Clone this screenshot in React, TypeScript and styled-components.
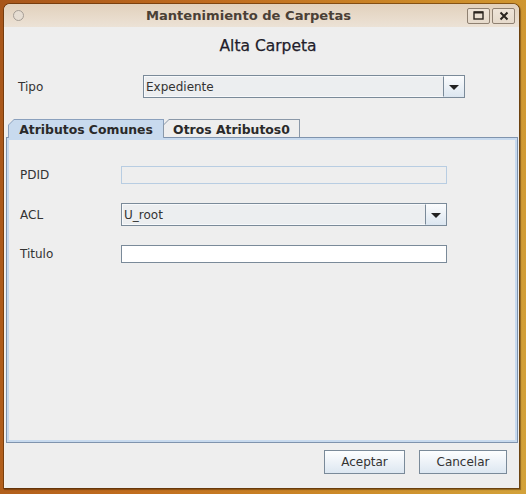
import React from 'react';
import styled, { createGlobalStyle } from 'styled-components';

const Global = createGlobalStyle`
  html, body { margin: 0; padding: 0; }
  body {
    width: 526px; height: 494px; overflow: hidden;
    background: linear-gradient(100deg, #a8561a 0%, #c06c1e 35%, #cc8a28 70%, #d3a23a 100%);
    font-family: "DejaVu Sans", "Liberation Sans", sans-serif;
  }
`;

const Desktop = styled.div`
  width: 526px; height: 494px; box-sizing: border-box;
  padding: 4px 7px 6px 4px;
  display: flex;
`;

const Window = styled.div`
  flex: 1; display: flex; flex-direction: column;
  border-radius: 6px 6px 0 0;
  box-shadow: 0 0 0 1px rgba(80, 40, 5, 0.55), 1px 1px 1px 1px rgba(60, 30, 0, 0.45);
  background: #eeeeee;
  overflow: hidden;
`;

const TitleBar = styled.div`
  height: 23px; flex: none; display: flex; align-items: center;
  background: linear-gradient(#e2d1bc, #ece2d6);
  padding: 0 4px 0 9px;
`;

const Dot = styled.div`
  width: 9px; height: 9px; border-radius: 50%;
  border: 1px solid #a59d95; background: #e6ddd2;
`;

const Title = styled.div`
  flex: 1; text-align: center; padding-left: 6px;
  font: bold 13.1px "DejaVu Sans", sans-serif; color: #4a4036;
`;

const WinButtons = styled.div`
  display: flex; gap: 2px;
`;

const WinButton = styled.div`
  width: 21px; height: 14px; border: 1px solid #8f8172; border-radius: 2px;
  display: flex; align-items: center; justify-content: center;
  background: linear-gradient(#eee4d8, #e6dacb);
`;

const Body = styled.div`
  flex: 1; display: flex; flex-direction: column;
  padding: 0 1px 14px 1px;
  border-left: 1px solid #f6f0ea;
`;

const Heading = styled.div`
  margin-top: 10px; height: 20px; line-height: 20px;
  text-align: center; padding-left: 12px;
  font: 15.5px "DejaVu Sans", sans-serif; color: #221d2a;
  -webkit-text-stroke: 0.25px #221d2a;
`;

const FormRow = styled.div<{ $top: number; $pad: number }>`
  display: flex; align-items: center;
  margin-top: ${p => p.$top}px;
  padding-left: ${p => p.$pad}px;
`;

const Label = styled.div<{ $w: number }>`
  width: ${p => p.$w}px; flex: none;
  font: 12px "DejaVu Sans", sans-serif; color: #333333;
`;

const Combo = styled.div<{ $w: number }>`
  width: ${p => p.$w}px; height: 23px; box-sizing: border-box;
  border: 1px solid #7a8a99; display: flex;
`;

const ComboField = styled.div`
  flex: 1; box-sizing: border-box; border: 1px solid #f7f9fb;
  border-right: 1px solid #7a8a99;
  background: #eceef0; padding-left: 1px;
  display: flex; align-items: center;
  font: 12px "DejaVu Sans", sans-serif; color: #333333;
`;

const ComboButton = styled.div`
  width: 20px; flex: none;
  background: linear-gradient(#fbfcfd, #dce6f0);
  display: flex; align-items: center; justify-content: center;
`;

const Arrow = styled.div`
  width: 0; height: 0;
  border-left: 5px solid transparent; border-right: 5px solid transparent;
  border-top: 5px solid #222;
  margin-top: 1px;
`;

const Tabs = styled.div`
  margin-top: 21px; flex: 1; display: flex; flex-direction: column;
`;

const TabStrip = styled.div`
  display: flex; padding-left: 2px; height: 18px; position: relative; z-index: 1;
`;

const TabOuter = styled.div<{ $sel?: boolean }>`
  height: ${p => (p.$sel ? 19 : 18)}px;
  padding: 1px 1px 0 1px; box-sizing: border-box;
  background: ${p => (p.$sel ? '#8aa0bd' : '#8a98a8')};
  clip-path: polygon(6px 0, 100% 0, 100% 100%, 0 100%, 0 6px);
  margin-left: ${p => (p.$sel ? 0 : -1)}px;
`;

const TabInner = styled.div<{ $sel?: boolean; $w: number }>`
  width: ${p => p.$w}px; height: 100%; box-sizing: border-box;
  background: ${p => (p.$sel ? '#c8daee' : '#eeeeee')};
  clip-path: polygon(5px 0, 100% 0, 100% 100%, 0 100%, 0 5px);
  display: flex; align-items: center; justify-content: center;
  padding-top: 1px;
  font: bold 12.4px "DejaVu Sans", sans-serif; color: #2a2a2a;
`;

const Panel = styled.div`
  flex: 1; box-sizing: border-box;
  border: 1px solid #7f93ad;
  box-shadow: inset 0 0 0 2px #c8daee;
  padding: 28px 0 0 13px;
  display: flex; flex-direction: column; gap: 19px;
`;

const FieldRow = styled.div`
  display: flex; align-items: center;
`;

const TextField = styled.div<{ $disabled?: boolean }>`
  width: 326px; height: 18px; box-sizing: border-box;
  border: 1px solid ${p => (p.$disabled ? '#b8cde2' : '#7a8a99')};
  background: ${p => (p.$disabled ? '#eeeeee' : '#ffffff')};
`;

const Footer = styled.div`
  display: flex; justify-content: flex-end; gap: 14px;
  margin-top: 7px; padding-right: 11px;
`;

const Button = styled.div<{ $w: number }>`
  width: ${p => p.$w}px; height: 24px; box-sizing: border-box;
  border: 1px solid #7a8a99;
  background: linear-gradient(#fdfeff, #dde7f1);
  display: flex; align-items: center; justify-content: center;
  font: 12px "DejaVu Sans", sans-serif; color: #333333;
`;

export default function App() {
  return (
    <>
      <Global />
      <Desktop>
        <Window>
          <TitleBar>
            <Dot />
            <Title>Mantenimiento de Carpetas</Title>
            <WinButtons>
              <WinButton>
                <svg width="11" height="9" viewBox="0 0 11 9">
                  <rect x="1" y="1" width="9" height="7" fill="none" stroke="#2a241e" strokeWidth="1.4" />
                  <line x1="1" y1="1.5" x2="10" y2="1.5" stroke="#2a241e" strokeWidth="2" />
                </svg>
              </WinButton>
              <WinButton>
                <svg width="10" height="10" viewBox="0 0 10 10">
                  <path d="M1.5 1.5 L8.5 8.5 M8.5 1.5 L1.5 8.5" stroke="#2a241e" strokeWidth="2" />
                </svg>
              </WinButton>
            </WinButtons>
          </TitleBar>
          <Body>
            <Heading>Alta Carpeta</Heading>
            <FormRow $top={18} $pad={12}>
              <Label $w={125}>Tipo</Label>
              <Combo $w={322}>
                <ComboField>Expediente</ComboField>
                <ComboButton><Arrow /></ComboButton>
              </Combo>
            </FormRow>
            <Tabs>
              <TabStrip>
                <TabOuter $sel>
                  <TabInner $sel $w={154}>Atributos Comunes</TabInner>
                </TabOuter>
                <TabOuter>
                  <TabInner $w={135}>Otros Atributos0</TabInner>
                </TabOuter>
              </TabStrip>
              <Panel>
                <FieldRow>
                  <Label $w={101}>PDID</Label>
                  <TextField $disabled />
                </FieldRow>
                <FieldRow>
                  <Label $w={101}>ACL</Label>
                  <Combo $w={326}>
                    <ComboField>U_root</ComboField>
                    <ComboButton><Arrow /></ComboButton>
                  </Combo>
                </FieldRow>
                <FieldRow>
                  <Label $w={101}>Titulo</Label>
                  <TextField />
                </FieldRow>
              </Panel>
            </Tabs>
            <Footer>
              <Button $w={81}>Aceptar</Button>
              <Button $w={88}>Cancelar</Button>
            </Footer>
          </Body>
        </Window>
      </Desktop>
    </>
  );
}
